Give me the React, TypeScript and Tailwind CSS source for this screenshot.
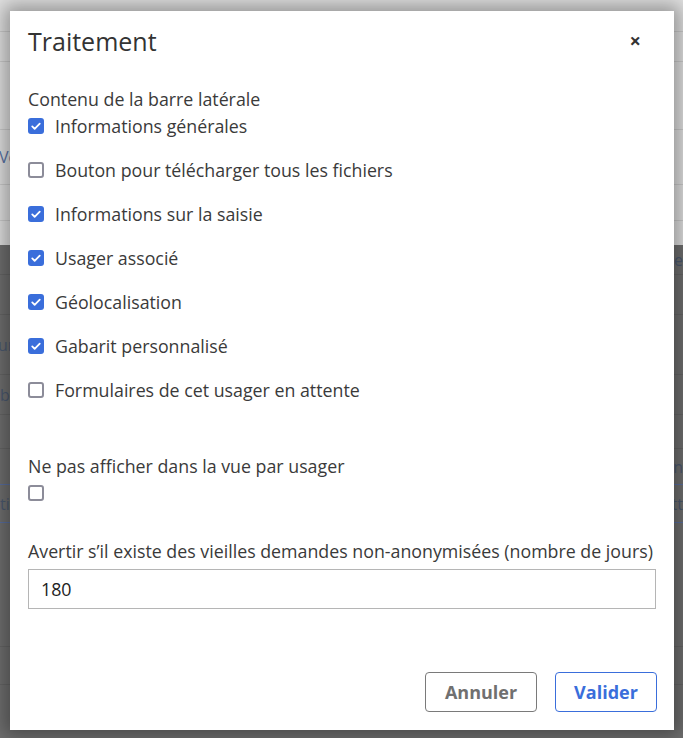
import { useState } from "react";

const font = { fontFamily: '"Open Sans", "Noto Sans", sans-serif' };

function Box({ checked, onToggle }: { checked: boolean; onToggle: () => void }) {
  return (
    <button
      type="button"
      onClick={onToggle}
      className={
        checked
          ? "flex h-4 w-4 shrink-0 items-center justify-center rounded-[3px] bg-[#3a6edb]"
          : "h-4 w-4 shrink-0 rounded-[3px] border-2 border-[#8c8c99] bg-white"
      }
    >
      {checked && (
        <svg viewBox="0 0 16 16" className="h-3 w-3">
          <path d="M3 8.5l3.2 3.2L13 4.8" fill="none" stroke="white" strokeWidth="2.4" strokeLinecap="round" strokeLinejoin="round" />
        </svg>
      )}
    </button>
  );
}

const items = [
  { label: "Informations générales", on: true },
  { label: "Bouton pour télécharger tous les fichiers", on: false },
  { label: "Informations sur la saisie", on: true },
  { label: "Usager associé", on: true },
  { label: "Géolocalisation", on: true },
  { label: "Gabarit personnalisé", on: true },
  { label: "Formulaires de cet usager en attente", on: false },
];

function Backdrop() {
  return (
    <div className="flex h-[738px] flex-col">
      <div className="flex h-[245px] flex-col bg-[#e2e2e2]">
        <div className="h-[32px] border-b border-[#cdcdcd]" />
        <div className="h-[30px] border-b border-[#cdcdcd]" />
        <div className="h-[68px] border-b border-[#cdcdcd]" />
        <div className="flex h-[55px] items-center border-b border-[#cdcdcd] text-[16px] text-[#5a74a6]">
          <span className="-ml-[1px]">Vo</span>
        </div>
        <div className="h-[36px] border-b border-[#cdcdcd]" />
      </div>
      <div className="flex flex-1 flex-col bg-[#707070] text-[16px] text-[#4c5a70]">
        <div className="flex h-[30px] items-center justify-end border-b border-[#666]">
          <span>Pe</span>
        </div>
        <div className="h-[40px] border-b border-[#666]" />
        <div className="flex h-[60px] items-center border-b border-[#666]">
          <span className="-ml-[2px]">ur</span>
        </div>
        <div className="flex h-[40px] items-center border-b border-[#666]">
          <span>b</span>
        </div>
        <div className="h-[34px] border-b border-[#666]" />
        <div className="flex h-[36px] items-center justify-end border-b border-[#5a6fa0]">
          <span>n</span>
        </div>
        <div className="flex h-[38px] items-center justify-between border-b border-[#5a6fa0]">
          <span>ti</span>
          <span>tt</span>
        </div>
        <div className="h-[124px] border-b border-[#666]" />
        <div className="h-[38px] border-b border-[#666]" />
      </div>
    </div>
  );
}

export default function App() {
  const [checks, setChecks] = useState(items.map((i) => i.on));
  const [hide, setHide] = useState(false);
  const [days, setDays] = useState("180");

  return (
    <div className="relative h-[738px] w-[683px] overflow-hidden" style={font}>
      <Backdrop />
      <div className="absolute left-[10px] top-[11px] flex h-[719px] w-[664px] flex-col bg-white text-[#3a3a3a] shadow-[0_0_18px_6px_rgba(0,0,0,0.35)]">
        <div className="flex items-center justify-between pl-[18px] pr-[33px] pt-[13px]">
          <h2 className="text-[25px] leading-[34px] text-[#333]">Traitement</h2>
          <span className="text-[20px] font-bold leading-none text-[#333]">×</span>
        </div>

        <div className="flex flex-col px-[18px] pt-[28px] text-[17.8px]">
          <div className="leading-[26px]">Contenu de la barre latérale</div>
          <div className="mt-[1px] flex flex-col gap-[18px]">
            {items.map((it, i) => (
              <label key={it.label} className="flex h-[26px] items-center gap-[11px]">
                <Box
                  checked={checks[i]}
                  onToggle={() => setChecks(checks.map((c, j) => (j === i ? !c : c)))}
                />
                <span>{it.label}</span>
              </label>
            ))}
          </div>

          <div className="mt-[50px] leading-[26px]">Ne pas afficher dans la vue par usager</div>
          <div className="mt-[1px] flex h-[26px] items-center">
            <Box checked={hide} onToggle={() => setHide(!hide)} />
          </div>

          <div className="mt-[32px] leading-[26px]">
            Avertir s’il existe des vieilles demandes non-anonymisées (nombre de jours)
          </div>
          <input
            value={days}
            onChange={(e) => setDays(e.target.value)}
            className="mt-[5px] h-[40px] w-[628px] border border-[#b5b5b5] px-[12px] text-[17.8px] text-[#222] outline-none"
          />
        </div>

        <div className="mt-auto flex justify-end gap-[18px] pb-[18px] pr-[17px]">
          <button className="h-[40px] w-[112px] rounded-[4px] border border-[#7a7a7a] text-[18px] font-bold text-[#707070]">
            Annuler
          </button>
          <button className="h-[40px] w-[102px] rounded-[4px] border border-[#3a6edb] text-[18px] font-bold text-[#3a6edb]">
            Valider
          </button>
        </div>
      </div>
    </div>
  );
}
